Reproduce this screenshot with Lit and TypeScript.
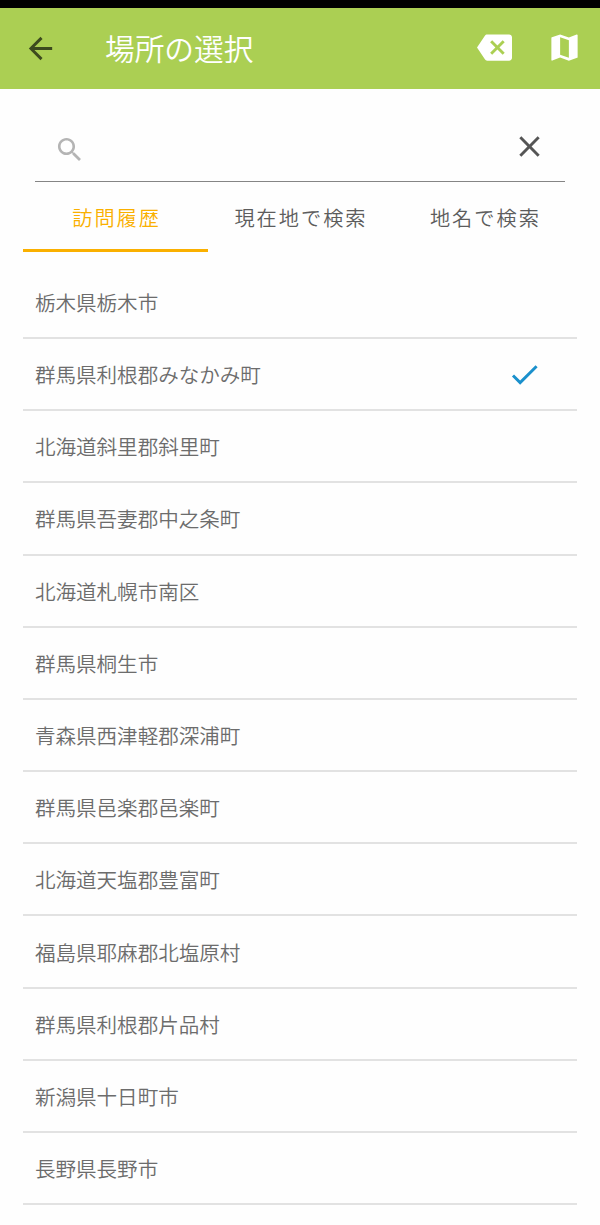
import { LitElement, html, css } from "lit";
import { customElement, state } from "lit/decorators.js";

const PLACES = [
  "栃木県栃木市",
  "群馬県利根郡みなかみ町",
  "北海道斜里郡斜里町",
  "群馬県吾妻郡中之条町",
  "北海道札幌市南区",
  "群馬県桐生市",
  "青森県西津軽郡深浦町",
  "群馬県邑楽郡邑楽町",
  "北海道天塩郡豊富町",
  "福島県耶麻郡北塩原村",
  "群馬県利根郡片品村",
  "新潟県十日町市",
  "長野県長野市",
];

const TABS = ["訪問履歴", "現在地で検索", "地名で検索"];

const ICONS = {
  back: "M20 11H7.83l5.59-5.59L12 4l-8 8 8 8 1.41-1.41L7.83 13H20v-2z",
  backspace:
    "M22 3H7c-.69 0-1.23.35-1.59.88L0 12l5.41 8.11c.36.53.9.89 1.59.89h15c1.1 0 2-.9 2-2V5c0-1.1-.9-2-2-2zm-3 12.59L17.59 17 14 13.41 10.41 17 9 15.59 12.59 12 9 8.41 10.41 7 14 10.59 17.59 7 19 8.41 15.41 12 19 15.59z",
  map: "M20.5 3l-.16.03L15 5.1 9 3 3.36 4.9c-.21.07-.36.25-.36.48V20.5c0 .28.22.5.5.5l.16-.03L9 18.9l6 2.1 5.64-1.9c.21-.07.36-.25.36-.48V3.5c0-.28-.22-.5-.5-.5zM15 19l-6-2.11V5l6 2.11V19z",
  search:
    "M15.5 14h-.79l-.28-.27C15.41 12.59 16 11.11 16 9.5 16 5.91 13.09 3 9.5 3S3 5.91 3 9.5 5.91 16 9.5 16c1.61 0 3.09-.59 4.23-1.57l.27.28v.79l5 4.99L20.49 19l-4.99-5zm-6 0C7.01 14 5 11.99 5 9.5S7.01 5 9.5 5 14 7.01 14 9.5 11.99 14 9.5 14z",
  close:
    "M19 6.41L17.59 5 12 10.59 6.41 5 5 6.41 10.59 12 5 17.59 6.41 19 12 13.41 17.59 19 19 17.59 13.41 12z",
  check: "M9 16.17L4.83 12l-1.42 1.41L9 19 21 7l-1.41-1.41z",
};

const icon = (name: keyof typeof ICONS) => html`
  <svg class="icon ${name}" viewBox="0 0 24 24" aria-hidden="true">
    <path d=${ICONS[name]}></path>
  </svg>
`;

@customElement("app-root")
export class AppRoot extends LitElement {
  @state() private tab = 0;
  @state() private selected = 1;

  static styles = css`
    :host {
      display: block;
      height: 1225px;
      overflow: hidden;
      background: #fefefe;
      color: #6c6c6c;
      font-family: "Noto Sans CJK JP", "Noto Sans", sans-serif;
      font-weight: 350;
    }
    .icon {
      display: block;
      flex: none;
      width: 35px;
      height: 35px;
      fill: currentColor;
    }
    button {
      display: block;
      margin: 0;
      padding: 0;
      border: 0;
      background: none;
      color: inherit;
      font: inherit;
      letter-spacing: inherit;
    }
    .status {
      height: 7.5px;
      background: #000;
    }
    .bar {
      display: flex;
      align-items: center;
      box-sizing: border-box;
      height: 81.5px;
      padding: 0 18px 0 23px;
      background: #abcf53;
      color: #fff;
    }
    .bar .back {
      color: #3c4a1e;
    }
    .title {
      flex: 1;
      margin: 0 0 0 47px;
      font-size: 29.7px;
      line-height: 44px;
      font-weight: 350;
    }
    .actions {
      display: flex;
      gap: 35px;
      padding-bottom: 1px;
    }
    .actions .icon {
      width: 35px;
      height: 35px;
    }
    .field {
      display: flex;
      justify-content: space-between;
      box-sizing: border-box;
      height: 93px;
      margin: 0 35px;
      padding: 40px 18px 0 19px;
      border-bottom: 1px solid #858585;
    }
    .search {
      width: 31.6px;
      height: 31.6px;
      margin-top: 5px;
      color: #b4b4b4;
    }
    .close {
      color: #555;
    }
    .tabs {
      display: grid;
      grid-template-columns: repeat(3, 1fr);
      height: 70px;
      margin: 0 23.4px;
      font-size: 20.2px;
      letter-spacing: 2px;
      color: #5c5c5c;
    }
    .tab {
      height: 70px;
      padding: 3px 0 0 2px;
      border-bottom: 3px solid transparent;
      line-height: 65px;
      white-space: nowrap;
    }
    .tab.active {
      color: #fab000;
      border-bottom-color: #fab000;
    }
    .list {
      margin: 14.8px 23.4px 0;
      padding: 0;
      list-style: none;
    }
    .row {
      display: flex;
      align-items: center;
      justify-content: space-between;
      box-sizing: border-box;
      height: 72.2px;
      padding: 0 35px 0 11.5px;
      border-bottom: 2px solid #e2e2e2;
      font-size: 20.55px;
      line-height: 30px;
    }
    .check {
      color: #1a90cc;
    }
  `;

  render() {
    return html`
      <div class="status"></div>
      <header class="bar">
        <button aria-label="戻る">${icon("back")}</button>
        <h1 class="title">場所の選択</h1>
        <div class="actions">
          <button>${icon("backspace")}</button>
          <button>${icon("map")}</button>
        </div>
      </header>
      <div class="field">${icon("search")} ${icon("close")}</div>
      <nav class="tabs">
        ${TABS.map(
          (label, i) => html`<button
            class="tab ${i === this.tab ? "active" : ""}"
            @click=${() => (this.tab = i)}
          >${label}</button>`
        )}
      </nav>
      <ul class="list">
        ${PLACES.map(
          (place, i) => html`<li class="row" @click=${() => (this.selected = i)}>
            <span>${place}</span>${i === this.selected ? icon("check") : ""}
          </li>`
        )}
      </ul>
    `;
  }
}
